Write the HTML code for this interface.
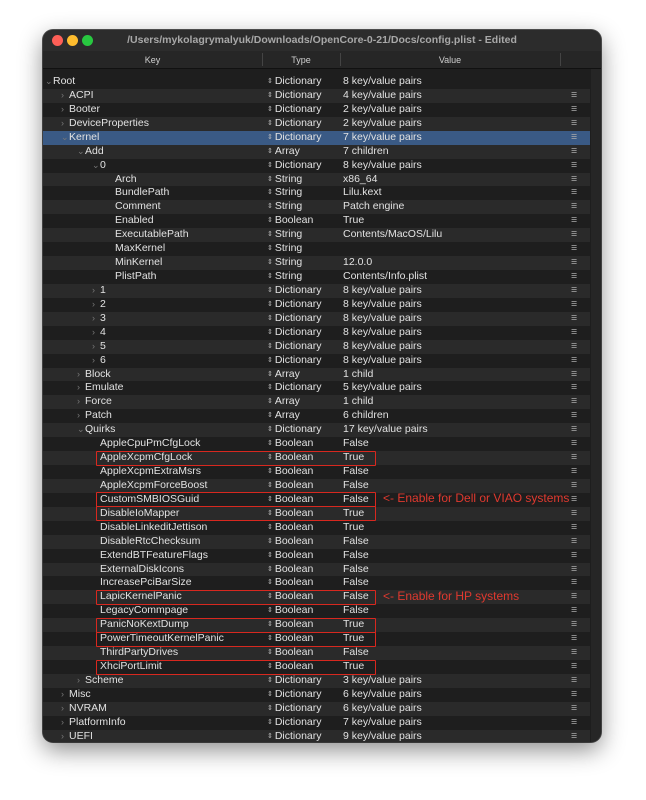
<!DOCTYPE html>
<html><head><meta charset="utf-8"><style>
*{margin:0;padding:0;box-sizing:border-box}
body{width:646px;height:800px;background:#fff;position:relative;overflow:hidden;font-family:"Liberation Sans",sans-serif;font-size:10.5px;color:#e2e2e2}
.win{position:absolute;left:43px;top:30px;width:558px;height:712px;background:#1e1e1e;border-radius:10px;overflow:hidden;box-shadow:0 8px 24px rgba(0,0,0,.45),0 0 0 1px #555}
.tb{position:absolute;left:0;top:0;width:100%;height:21px;background:#2c2c2c;text-align:center;line-height:21px;font-weight:bold;color:#a8a8a8;font-size:10.5px}
.dot{position:absolute;top:5px;width:11px;height:11px;border-radius:50%}
.hd{position:absolute;left:0;top:21px;width:100%;height:18px;background:#262626;border-bottom:1px solid #111;color:#cfcfcf;font-size:9px;line-height:18px}
.hd span{position:absolute;text-align:center}
.vl{position:absolute;top:23px;width:1px;height:13px;background:#444}
.sb{position:absolute;right:0;top:39px;width:10px;height:674px;background:#262626}
.row{position:absolute;left:0;width:547px;height:13.93px;line-height:13.93px;white-space:nowrap}
.row.a{background:#2a2a2a}
.row.sel{background:#3a5a85}
.k,.t,.v,.m,.c{position:absolute}
.t{left:224px}.v{left:300px}.m{left:528px;color:#aaa}
.c{color:#777;font-size:9px}
.t:before{content:"⇕ ";font-size:7px;color:#bbb;position:relative;top:-1px}
.box{position:absolute;left:96px;width:280px;height:15px;border:1.5px solid #d8281f;border-radius:1px}
.ann{position:absolute;color:#e0392f;font-size:12px}
</style></head><body>
<div class="win">
<div class="tb">/Users/mykolagrymalyuk/Downloads/OpenCore-0-21/Docs/config.plist - Edited
<div class="dot" style="left:9px;background:#fe5f57"></div><div class="dot" style="left:24px;background:#febc2e"></div><div class="dot" style="left:39px;background:#28c840"></div></div>
<div class="hd"><span style="left:0;width:219px">Key</span><span style="left:219px;width:78px">Type</span><span style="left:297px;width:220px">Value</span></div>
<div class="vl" style="left:219px"></div><div class="vl" style="left:297px"></div><div class="vl" style="left:517px"></div>
<div class="sb"></div>
<div id="rows"></div>
</div>
<div id="boxes"></div>
<div class="ann" style="left:383px;top:491px">&lt;- Enable for Dell or VIAO systems</div>
<div class="ann" style="left:383px;top:589px">&lt;- Enable for HP systems</div>
<script>
var R=[[0,"Root","Dictionary","8 key/value pairs","v",0],[1,"ACPI","Dictionary","4 key/value pairs",">"],[1,"Booter","Dictionary","2 key/value pairs",">"],[1,"DeviceProperties","Dictionary","2 key/value pairs",">"],[1,"Kernel","Dictionary","7 key/value pairs","v"],[2,"Add","Array","7 children","v"],[3,"0","Dictionary","8 key/value pairs","v"],
[4,"Arch","String","x86_64"],[4,"BundlePath","String","Lilu.kext"],[4,"Comment","String","Patch engine"],[4,"Enabled","Boolean","True"],[4,"ExecutablePath","String","Contents/MacOS/Lilu"],[4,"MaxKernel","String",""],[4,"MinKernel","String","12.0.0"],[4,"PlistPath","String","Contents/Info.plist"],
[3,"1","Dictionary","8 key/value pairs",">"],[3,"2","Dictionary","8 key/value pairs",">"],[3,"3","Dictionary","8 key/value pairs",">"],[3,"4","Dictionary","8 key/value pairs",">"],[3,"5","Dictionary","8 key/value pairs",">"],[3,"6","Dictionary","8 key/value pairs",">"],
[2,"Block","Array","1 child",">"],[2,"Emulate","Dictionary","5 key/value pairs",">"],[2,"Force","Array","1 child",">"],[2,"Patch","Array","6 children",">"],[2,"Quirks","Dictionary","17 key/value pairs","v"],
[3,"AppleCpuPmCfgLock","Boolean","False"],[3,"AppleXcpmCfgLock","Boolean","True"],[3,"AppleXcpmExtraMsrs","Boolean","False"],[3,"AppleXcpmForceBoost","Boolean","False"],[3,"CustomSMBIOSGuid","Boolean","False"],[3,"DisableIoMapper","Boolean","True"],[3,"DisableLinkeditJettison","Boolean","True"],[3,"DisableRtcChecksum","Boolean","False"],[3,"ExtendBTFeatureFlags","Boolean","False"],[3,"ExternalDiskIcons","Boolean","False"],[3,"IncreasePciBarSize","Boolean","False"],[3,"LapicKernelPanic","Boolean","False"],[3,"LegacyCommpage","Boolean","False"],[3,"PanicNoKextDump","Boolean","True"],[3,"PowerTimeoutKernelPanic","Boolean","True"],[3,"ThirdPartyDrives","Boolean","False"],[3,"XhciPortLimit","Boolean","True"],
[2,"Scheme","Dictionary","3 key/value pairs",">"],[1,"Misc","Dictionary","6 key/value pairs",">"],[1,"NVRAM","Dictionary","6 key/value pairs",">"],[1,"PlatformInfo","Dictionary","7 key/value pairs",">"],[1,"UEFI","Dictionary","9 key/value pairs",">"]];
var ind=[10,26,42,57,72],h="";
R.forEach(function(r,i){var top=45+i*13.93;var cl="row"+(i%2?" a":"")+(i==4?" sel":"");
h+='<div class="'+cl+'" style="top:'+top+'px">'+(r[4]?'<span class="c" style="left:'+(ind[r[0]]-8)+'px">'+(r[4]=="v"?"⌄":"›")+'</span>':'')+'<span class="k" style="left:'+ind[r[0]]+'px">'+r[1]+'</span><span class="t">'+r[2]+'</span><span class="v">'+r[3]+'</span>'+(i?'<span class="m">≡</span>':'')+'</div>';});
document.getElementById("rows").innerHTML=h;
var b="";[27,30,31,37,39,40,42].forEach(function(i){b+='<div class="box" style="top:'+(30+45+i*13.93-0.5)+'px"></div>';});
document.getElementById("boxes").innerHTML=b;
</script>
</body></html>
